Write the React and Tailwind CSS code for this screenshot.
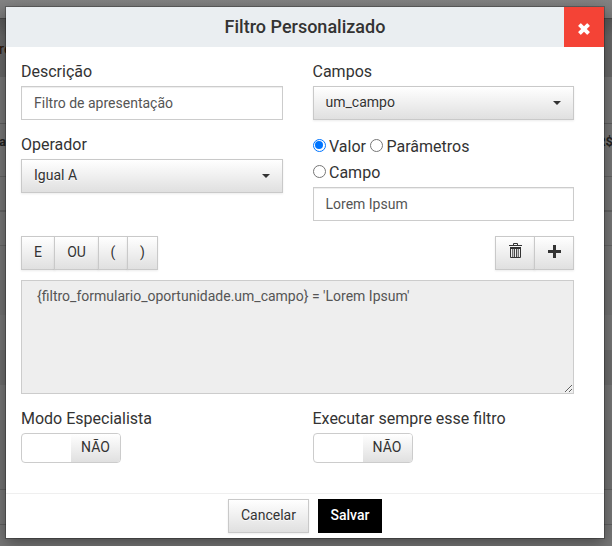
import React from 'react';

const button =
  'border border-[#c9c9c9] bg-gradient-to-b from-white to-[#e0e0e0] text-[#333] shadow-[0_1px_2px_rgba(0,0,0,0.08)] [text-shadow:0_1px_1px_rgba(255,255,255,0.75)]';

function Backdrop() {
  return (
    <div className="absolute inset-0 flex flex-col overflow-hidden bg-[#777] text-[13px] font-bold text-[#222]">
      <div className="h-[18px] shrink-0 bg-gradient-to-b from-[#838383] to-[#7a7a7a]" />
      <div className="h-[59px] shrink-0 border-t border-[#484848] bg-gradient-to-b from-[#585858] via-[#686868] via-30% to-[#686868] pt-[20px]">
        <span className="-ml-px text-[15px] leading-[20px] font-normal text-[#2c1608]">re</span>
      </div>
      <div className="h-[47px] shrink-0 border-b border-[#5f5f5f]" />
      <div className="flex h-[53px] shrink-0 justify-between border-b border-[#646464] pt-[8px] leading-[20px]">
        <span className="-ml-px">a</span>
        <span className="-mr-px">R$</span>
      </div>
      <div className="h-[35px] shrink-0 border-b-2 border-[#646464]" />
      <div className="h-[34px] shrink-0 border-b border-[#666]" />
      <div className="h-[34px] shrink-0" />
      <div className="h-[35px] shrink-0 bg-[#727272]" />
      <div className="h-[35px] shrink-0" />
      <div className="h-[35px] shrink-0 bg-[#6e6e6e]" />
      <div className="h-[35px] shrink-0" />
      <div className="h-[70px] shrink-0 border-b border-[#616161] bg-[#727272]" />
      <div className="h-[35px] shrink-0 border-b border-[#616161]" />
    </div>
  );
}

function Select({ value }) {
  return (
    <button className={`${button} flex h-[34px] w-full items-center justify-between pr-[12px] pl-3 text-left text-[14px]`}>
      <span className="-mt-[2px]">{value}</span>
      <span className="-mt-px border-x-4 border-t-4 border-x-transparent border-t-[#333]" />
    </button>
  );
}

function TextInput({ value }) {
  return (
    <input
      className="block h-[34px] w-full border border-[#ccc] bg-white px-3 text-[14px] text-[#555] shadow-[inset_0_1px_1px_rgba(0,0,0,0.075)] outline-none"
      defaultValue={value}
    />
  );
}

function Radio({ label, checked }) {
  return (
    <label className="flex h-[26px] items-center">
      <span
        className={`mr-[3.5px] -mt-[2px] flex size-[13px] items-center justify-center rounded-full border bg-white ${checked ? 'border-[#0075ff]' : 'border-[#767676]'}`}
      >
        {checked && <span className="size-[8px] rounded-full bg-[#0075ff]" />}
      </span>
      <span className="pt-[2px]">{label}</span>
    </label>
  );
}

function Toggle() {
  return (
    <div className="mt-px flex h-[30px] w-[100px] overflow-hidden rounded-[4px] border border-[#ccc] bg-white">
      <div className="w-[49px]" />
      <div className="flex-1 bg-gradient-to-b from-white to-[#e0e0e0] text-center text-[14px] leading-[27px] text-[#333]">NÃO</div>
    </div>
  );
}

export default function App() {
  return (
    <div className="relative h-[546px] w-[612px] overflow-hidden pt-[7px] pl-[6px] font-['Roboto',sans-serif] text-[16px] text-[#333]">
      <Backdrop />
      <div className="relative flex h-[531px] w-[598px] flex-col bg-white shadow-[0_0_0_1px_rgba(0,0,0,0.25),0_5px_15px_rgba(0,0,0,0.4)]">
        <header className="flex h-[40px] shrink-0 bg-[#eaeef1]">
          <h1 className="flex-1 pl-[40px] text-center text-[18px] leading-[39px] font-medium">Filtro Personalizado</h1>
          <button className="flex w-[40px] items-center justify-center bg-[#f44336] pt-[3px] text-white" aria-label="Fechar">
            <svg width="12" height="12" viewBox="0 0 12 12" fill="currentColor">
              <path d="M3.2.4 6 3.2 8.8.4q.4-.4.8 0l2 2q.4.4 0 .8L8.8 6l2.8 2.8q.4.4 0 .8l-2 2q-.4.4-.8 0L6 8.8l-2.8 2.8q-.4.4-.8 0l-2-2q-.4-.4 0-.8L3.2 6 .4 3.2q-.4-.4 0-.8l2-2q.4-.4.8 0Z" />
            </svg>
          </button>
        </header>
        <main className="flex-1 px-[15px] pt-[12px]">
          <div className="grid w-[553px] grid-cols-[262px_261.5px] gap-x-[29.5px]">
            <div>
              <div className="mb-px h-[26px] leading-[26px]">Descrição</div>
              <TextInput value="Filtro de apresentação" />
            </div>
            <div>
              <div className="mb-px h-[26px] leading-[26px]">Campos</div>
              <Select value="um_campo" />
            </div>
            <div className="mt-[12px]">
              <div className="mb-px h-[26px] leading-[26px]">Operador</div>
              <Select value="Igual A" />
            </div>
            <div className="mt-[13px]">
              <div className="flex gap-1">
                <Radio label="Valor" checked />
                <Radio label="Parâmetros" />
              </div>
              <Radio label="Campo" />
              <div className="mt-[2px]">
                <TextInput value="Lorem Ipsum" />
              </div>
            </div>
          </div>
          <div className="mt-[15px] flex h-[34px] w-[553px] justify-between text-[14px]">
            <div className="flex">
              <button className={`${button} w-[34px] pb-[2px]`}>E</button>
              <button className={`${button} -ml-px w-[45px] pb-[2px]`}>OU</button>
              <button className={`${button} -ml-px w-[30px] pb-[2px]`}>(</button>
              <button className={`${button} -ml-px w-[31px] pb-[2px]`}>)</button>
            </div>
            <div className="flex">
              <button className={`${button} flex w-[40px] justify-center pt-[6px]`} aria-label="Excluir">
                <svg width="13" height="16" viewBox="0 0 13 16" fill="none" stroke="#333">
                  <path d="M4.5 2V.5h4V2" />
                  <path d="M0 2.5h13" />
                  <path d="M1 5h11" strokeWidth="2" />
                  <path d="M1.5 5v9.5h10V5" />
                  <path d="M3.75 5v9M5.5 5v9M7.5 5v9M9.25 5v9" strokeWidth=".9" />
                </svg>
              </button>
              <button className={`${button} -ml-px flex w-[40px] justify-center pt-[8px]`} aria-label="Adicionar">
                <svg width="13" height="13" viewBox="0 0 13 13" fill="#333">
                  <path d="M5 0h3v5h5v3H8v5H5V8H0V5h5Z" />
                </svg>
              </button>
            </div>
          </div>
          <textarea
            className="mt-[10px] block h-[114px] w-[553px] resize border border-[#ccc] bg-[#eee] px-[15px] py-[5px] text-[14px] leading-[20px] text-[#555] outline-none"
            defaultValue="{filtro_formulario_oportunidade.um_campo} = 'Lorem Ipsum'"
          />
          <div className="mt-[12px] grid w-[553px] grid-cols-[262px_261.5px] gap-x-[29.5px]">
            <div>
              <div className="h-[26px] leading-[26px]">Modo Especialista</div>
              <Toggle />
            </div>
            <div>
              <div className="h-[26px] leading-[26px]">Executar sempre esse filtro</div>
              <Toggle />
            </div>
          </div>
        </main>
        <footer className="flex h-[45px] shrink-0 justify-center gap-[9px] border-t border-[#efefef] pt-[5px] text-[14px]">
          <button className={`${button} h-[34px] w-[81px] pb-[2px]`}>Cancelar</button>
          <button className="h-[34px] w-[64px] bg-black pb-[2px] font-medium text-white">Salvar</button>
        </footer>
      </div>
    </div>
  );
}
